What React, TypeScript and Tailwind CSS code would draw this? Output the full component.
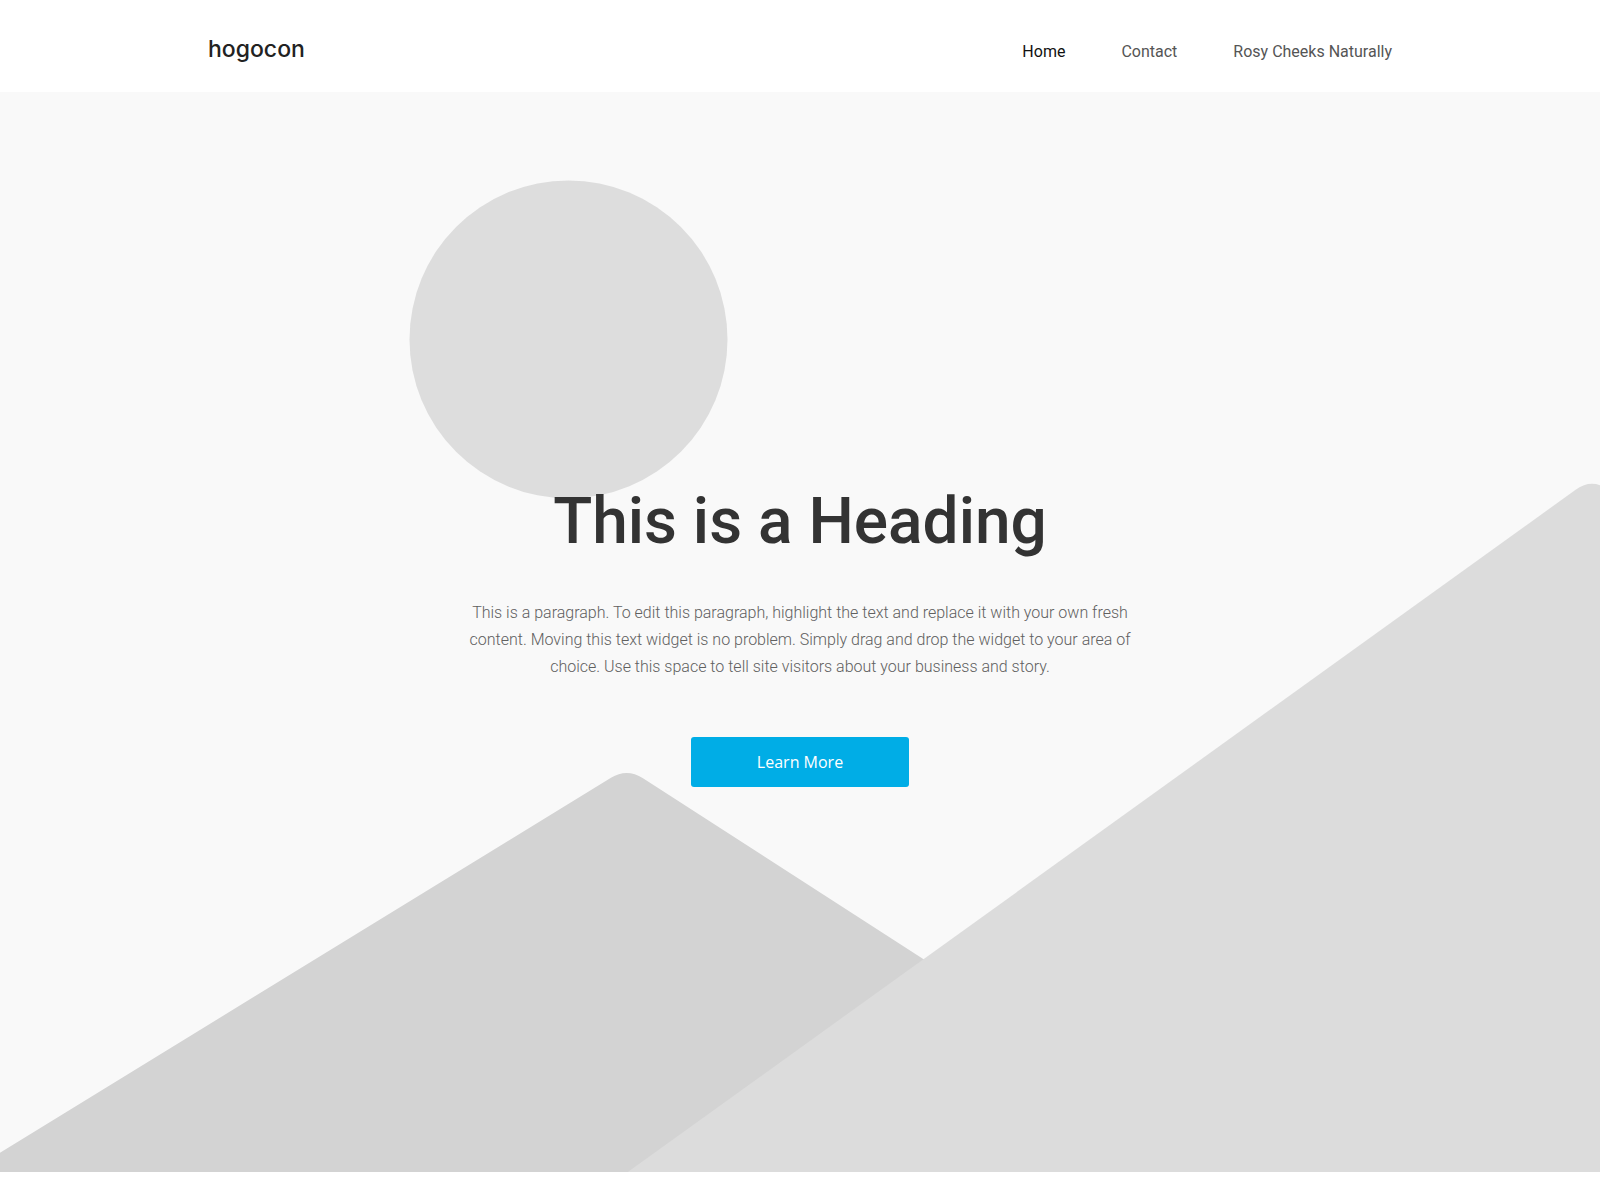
export default function App() {
  const navLinks = [
    { label: "Home", active: true },
    { label: "Contact", active: false },
    { label: "Rosy Cheeks Naturally", active: false },
  ];

  return (
    <div className="w-[1600px] min-h-[1200px] bg-white font-['Roboto',sans-serif]">
      <header className="h-[92px] bg-white flex items-center justify-between px-[208px] pt-[6px]">
        <a href="#" className="text-[23px] leading-none text-[#222] font-['Inter',sans-serif] font-medium">
          hogocon
        </a>
        <nav className="flex items-center gap-[56px] pt-[6px]">
          {navLinks.map((link) => (
            <a
              key={link.label}
              href="#"
              className={`text-[16px] ${link.active ? "text-[#111]" : "text-[#555] hover:text-[#111]"}`}
            >
              {link.label}
            </a>
          ))}
        </nav>
      </header>

      <section className="relative h-[1080px] bg-[#f9f9f9] overflow-hidden">
        {/* background drawing: sun + two mountains */}
        <svg
          className="absolute inset-0"
          width="1600"
          height="1080"
          viewBox="0 0 1600 1080"
          aria-hidden="true"
        >
          <circle cx="568.5" cy="247.4" r="159" fill="#dddddd" />
          <path
            d="M -100 1122 L 611 685.8 Q 627 676 643 686.3 L 1300 1110 L -100 1110 Z"
            fill="#d3d3d3"
          />
          <path
            d="M 600 1100 L 1576 397.5 Q 1592 386 1608 397.5 L 1700 470 L 1700 1100 Z"
            fill="#dcdcdc"
          />
        </svg>

        <div className="relative z-10 flex flex-col items-center pt-[392px]">
          <h1 className="text-[64px] leading-[1.2] font-medium text-[#333]">This is a Heading</h1>
          <p className="mt-[38px] w-[680px] text-center text-[16px] leading-[27px] font-light text-[#606060]">
            This is a paragraph. To edit this paragraph, highlight the text and replace it with your own fresh
            content. Moving this text widget is no problem. Simply drag and drop the widget to your area of
            choice. Use this space to tell site visitors about your business and story.
          </p>
          <button className="mt-[57px] w-[218px] h-[50px] rounded-[3px] bg-[#00ade6] text-white text-[16px] font-['Open_Sans',sans-serif]">
            Learn More
          </button>
        </div>
      </section>
    </div>
  );
}
